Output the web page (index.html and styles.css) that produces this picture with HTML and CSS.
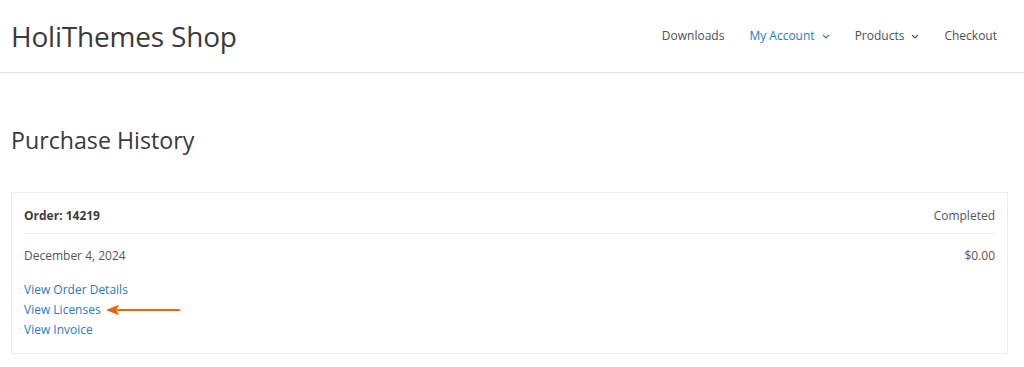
FILE: index.html
```html
<!DOCTYPE html>
<html>
<head>
<meta charset="utf-8">
<link rel="stylesheet" href="styles.css">
</head>
<body>
<header class="site-header">
  <div class="brand">HoliThemes Shop</div>
  <nav class="nav">
    <a class="nav-item">Downloads</a>
    <a class="nav-item active">My Account <svg class="chev" width="8" height="5" viewBox="0 0 8 5"><path d="M1 1l3 3 3-3" fill="none" stroke="currentColor" stroke-width="1.1"/></svg></a>
    <a class="nav-item">Products <svg class="chev" width="8" height="5" viewBox="0 0 8 5"><path d="M1 1l3 3 3-3" fill="none" stroke="currentColor" stroke-width="1.1"/></svg></a>
    <a class="nav-item">Checkout</a>
  </nav>
</header>
<main class="content">
  <h1 class="page-title">Purchase History</h1>
  <section class="order-card">
    <div class="row row-head">
      <span class="order-id">Order: 14219</span>
      <span class="status">Completed</span>
    </div>
    <div class="row row-date">
      <span>December 4, 2024</span>
      <span>$0.00</span>
    </div>
    <ul class="links">
      <li><a>View Order Details</a></li>
      <li class="with-arrow"><a>View Licenses</a>
        <svg class="arrow" width="75" height="12" viewBox="0 0 75 12"><path d="M12 6H73" stroke="#e8620f" stroke-width="2.2" stroke-linecap="round"/><path d="M0 6L13 0.8L10.5 6L13 11.2Z" fill="#e8620f"/></svg>
      </li>
      <li><a>View Invoice</a></li>
    </ul>
  </section>
</main>
</body>
</html>
```
FILE: styles.css
```css
* { box-sizing: border-box; }
html, body { margin: 0; padding: 0; background: #fff; }
body { font-family: "Open Sans", "Noto Sans", sans-serif; color: #444; }
.site-header {
  height: 73px;
  border-bottom: 1px solid #e4e4e4;
  display: flex;
  align-items: center;
  justify-content: space-between;
  padding: 0 27px 0 11px;
}
.brand { font-size: 28px; color: #3a3a3a; letter-spacing: -0.2px; padding-bottom: 1px; }
.nav { display: flex; gap: 25px; align-items: center; padding-bottom: 2px; }
.nav-item { font-size: 12px; color: #4f4f4f; display: flex; align-items: center; gap: 7px; }
.nav-item.active { color: #2b7bb9; }
.chev { margin-top: 2px; }
.content { padding: 0 16px 0 11px; }
.page-title { font-size: 23.2px; font-weight: 400; color: #3a3a3a; margin: 52px 0 37px; line-height: 30px; }
.order-card { border: 1px solid #ececec; padding: 0 12px 13px; }
.row { display: flex; justify-content: space-between; font-size: 12px; color: #555; }
.row-head { height: 41px; align-items: center; padding-top: 5px; border-bottom: 1px solid #f0f0f0; }
.order-id { font-weight: 700; color: #3c3c3c; }
.row-date { height: 44px; align-items: center; padding-bottom: 1px; }
.links { list-style: none; margin: 0; padding: 2px 0 0; font-size: 12px; line-height: 20px; }
.links a { color: #2b7bb9; }
.with-arrow { display: flex; align-items: center; gap: 5px; }
.arrow { display: block; }
```
